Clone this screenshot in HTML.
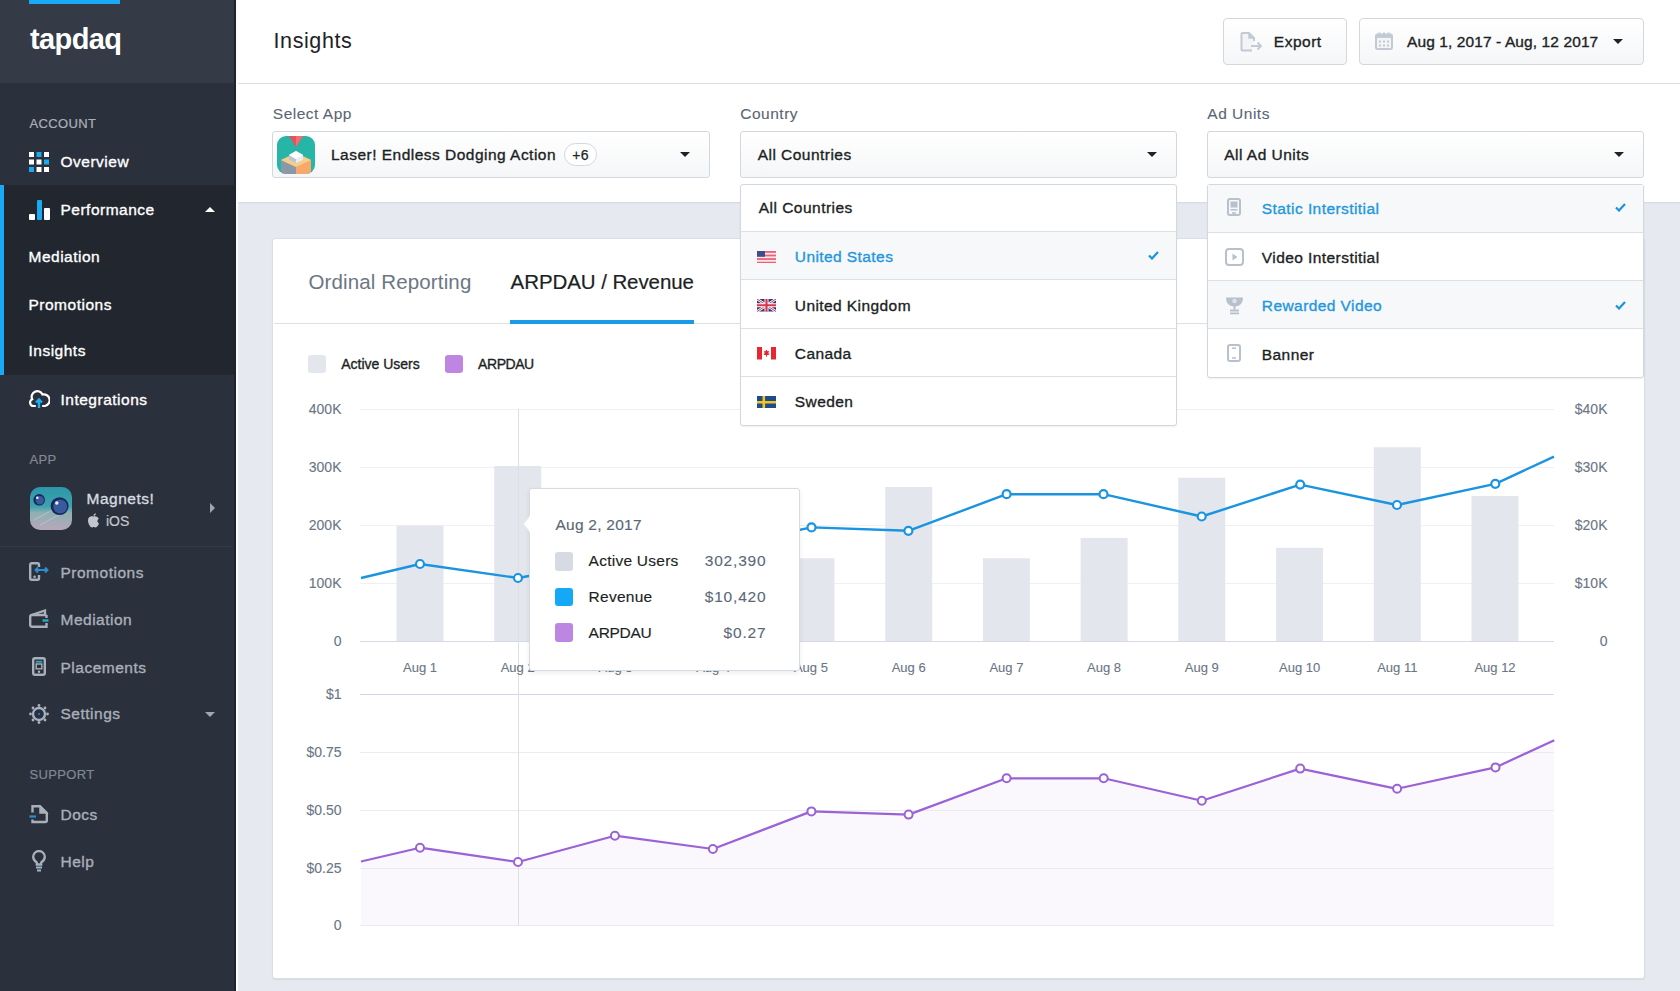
<!DOCTYPE html>
<html><head><meta charset="utf-8"><style>
*{box-sizing:border-box;margin:0;padding:0}
html,body{width:1680px;height:991px;overflow:hidden;background:#e6e9ef;font-family:"Liberation Sans",sans-serif;position:relative}
.abs{position:absolute}
.t{position:absolute;white-space:nowrap}
.sb{position:absolute;left:0;top:0;width:236px;height:991px;background:#2b313c;border-right:2px solid #1f232b}
.sb .logo{position:absolute;left:0;top:0;width:234px;height:83px;background:#343b47}
.sb .lbl{position:absolute;left:29.5px;font-size:13px;line-height:16px;color:#a9b1bb;letter-spacing:0.35px;-webkit-text-stroke:0.2px currentColor}
.sb .it{position:absolute;left:60.5px;font-size:15.5px;line-height:20px;color:#fff;letter-spacing:0.5px;-webkit-text-stroke:0.35px #fff}
.sb .it.g{color:#a9b0ba;-webkit-text-stroke:0.35px #a9b0ba}
.sb .sub{position:absolute;left:28.5px;font-size:15.5px;line-height:20px;color:#fff;letter-spacing:0.5px;-webkit-text-stroke:0.35px #fff}
.caret{position:absolute;width:0;height:0;border-left:5px solid transparent;border-right:5px solid transparent;border-top:5px solid #1f2329}
.box{position:absolute;border:1px solid #d3d8df;border-radius:3px;background:linear-gradient(#fff,#f5f6f8)}
.dd{position:absolute;background:#fff;border:1px solid #d3d8df;border-radius:3px;box-shadow:0 1px 2px rgba(0,0,0,0.07)}
.hl{position:absolute;background:#dde1e7;height:1px}
.ax{position:absolute;font-size:14px;line-height:16px;color:#6a7585;white-space:nowrap;-webkit-text-stroke:0.1px #6a7585}
.ax2{font-size:13px}
</style></head><body>
<!-- SIDEBAR -->
<div class="sb">
  <div class="logo"></div>
  <div class="abs" style="left:29px;top:0;width:91px;height:4px;background:#19a9f7"></div>
  <div class="abs" style="left:30px;top:22px;font-size:29px;line-height:34px;font-weight:700;color:#fff;letter-spacing:-0.6px">tapdaq</div>
  <!-- account section -->
  <div class="lbl" style="top:116.1px">ACCOUNT</div>
  <svg class="abs" style="left:29px;top:152px" width="20" height="20">
    <rect x="0" y="0" width="5" height="5" fill="#fff"/><rect x="7.5" y="0" width="5" height="5" fill="#19aaf0"/><rect x="15" y="0" width="5" height="5" fill="#fff"/>
    <rect x="0" y="7.5" width="5" height="5" fill="#fff"/><rect x="7.5" y="7.5" width="5" height="5" fill="#fff"/><rect x="15" y="7.5" width="5" height="5" fill="#19aaf0"/>
    <rect x="0" y="15" width="5" height="5" fill="#19aaf0"/><rect x="7.5" y="15" width="5" height="5" fill="#fff"/><rect x="15" y="15" width="5" height="5" fill="#fff"/>
  </svg>
  <div class="it" style="top:152.4px">Overview</div>
  <!-- performance submenu -->
  <div class="abs" style="left:0;top:185px;width:234px;height:190px;background:#22272f"></div>
    <div class="abs" style="left:0;top:185px;width:4px;height:190px;background:#19a9f7"></div>
  <svg class="abs" style="left:29px;top:199px" width="21" height="21">
    <rect x="0" y="15" width="6" height="6" rx="1" fill="#fff"/><rect x="8" y="1" width="5" height="20" rx="1" fill="#19aaf0"/><rect x="15" y="9" width="6" height="12" rx="1" fill="#fff"/>
  </svg>
  <div class="it" style="top:200px">Performance</div>
  <div class="abs" style="left:205px;top:207px;width:0;height:0;border-left:5px solid transparent;border-right:5px solid transparent;border-bottom:5px solid #fff"></div>
  <div class="sub" style="top:247.2px">Mediation</div>
  <div class="sub" style="top:294.8px">Promotions</div>
  <div class="sub" style="top:341.3px">Insights</div>
  <!-- integrations -->
  <svg class="abs" style="left:29px;top:389px" width="21" height="19" viewBox="0 0 21 19">
    <path d="M6 17 H4.5 A3.5 3.5 0 0 1 3.2 10.3 A5.5 5.5 0 0 1 13.5 5.5 A4.8 4.8 0 0 1 16 17 H14" fill="none" stroke="#fff" stroke-width="2.2" stroke-linecap="round"/>
    <path d="M10 19 V12 M7 13.5 L10 10.5 L13 13.5" fill="none" stroke="#1ab0f0" stroke-width="2.4"/>
  </svg>
  <div class="it" style="top:389.6px">Integrations</div>
  <!-- app -->
  <div class="lbl" style="top:451.5px;color:#7f8894">APP</div>
  <svg class="abs" style="left:30px;top:487px" width="42" height="43" viewBox="0 0 42 43">
    <defs><linearGradient id="mg" x1="0" y1="0" x2="0" y2="1"><stop offset="0" stop-color="#2a98aa"/><stop offset="0.45" stop-color="#3fa2ad"/><stop offset="0.6" stop-color="#8fb0b4"/><stop offset="1" stop-color="#b7a7bb"/></linearGradient></defs>
    <rect x="0" y="0" width="42" height="43" rx="10" fill="url(#mg)"/>
    <path d="M4 33 L30 19 M10 38 L36 24" stroke="#cfe3e6" stroke-width="1" opacity="0.45"/>
    <circle cx="9.2" cy="12.8" r="5.8" fill="#16285a"/><circle cx="9.8" cy="13.2" r="4.2" fill="#3a5aa0"/><circle cx="7.3" cy="10.8" r="1.3" fill="#f0f4ff"/>
    <circle cx="29.6" cy="19.1" r="8.9" fill="#16285a"/><circle cx="30.2" cy="19.5" r="6.9" fill="#3a5a9e"/><circle cx="26.8" cy="16" r="1.7" fill="#f0f4ff"/>
  </svg>
  <div class="abs" style="left:86.5px;top:488.6px;font-size:15.5px;line-height:20px;letter-spacing:0.5px;color:#d6dae0;-webkit-text-stroke:0.35px #d6dae0">Magnets!</div>
  <svg class="abs" style="left:87px;top:513px" width="13" height="15" viewBox="0 0 13 15">
    <path d="M6.5 3.5 C4 2.6 1 3.6 1 7.5 C1 11 3.5 14.5 5 14.5 C5.8 14.5 6 14 6.8 14 C7.6 14 7.8 14.5 8.5 14.5 C10 14.5 11.5 11.8 12 10.5 C10.3 9.8 9.8 7 11.8 5.8 C11 4 9 3 6.5 3.5 Z M6.5 3 C6.3 1.6 7.5 0.3 8.8 0.2 C9 1.6 7.8 3 6.5 3 Z" fill="#c2c7ce"/>
  </svg>
  <div class="abs" style="left:106px;top:512.4px;font-size:14px;line-height:18px;color:#c2c7ce;-webkit-text-stroke:0.2px #c2c7ce">iOS</div>
  <div class="abs" style="left:210px;top:503px;width:0;height:0;border-top:5px solid transparent;border-bottom:5px solid transparent;border-left:5px solid #a0a7b1"></div>
  <div class="abs" style="left:0;top:546px;width:232px;height:1px;background:#343a46"></div>
  <!-- app nav -->
  <svg class="abs" style="left:29px;top:562px" width="20" height="19" viewBox="0 0 20 19">
    <path d="M10 5 V2.5 A1.5 1.5 0 0 0 8.5 1.2 H2.7 A1.5 1.5 0 0 0 1.2 2.7 V16.3 A1.5 1.5 0 0 0 2.7 17.8 H8.5 A1.5 1.5 0 0 0 10 16.3 V13" fill="none" stroke="#a9b0ba" stroke-width="2.4"/>
    <circle cx="5.6" cy="14.8" r="1.3" fill="#a9b0ba"/>
    <path d="M6.5 8 H18.5 M9 5.5 L6.5 8 L9 10.5 M16 5.5 L18.5 8 L16 10.5" fill="none" stroke="#2a8fd0" stroke-width="2"/>
  </svg>
  <div class="it g" style="top:562.9px">Promotions</div>
  <svg class="abs" style="left:29px;top:609px" width="20" height="19" viewBox="0 0 20 19">
    <path d="M2.5 6 L16 1.5 V5.5" fill="none" stroke="#a9b0ba" stroke-width="2.3"/>
    <path d="M17.5 6 H3 A1.8 1.8 0 0 0 1.2 7.8 V16 A1.8 1.8 0 0 0 3 17.8 H17.5 V14 M17.5 6 V9" fill="none" stroke="#a9b0ba" stroke-width="2.4"/>
    <path d="M13.5 11.5 H19.5" stroke="#2aa9c9" stroke-width="2.4"/>
  </svg>
  <div class="it g" style="top:610.3px">Mediation</div>
  <svg class="abs" style="left:32px;top:656.5px" width="14" height="19" viewBox="0 0 14 19">
    <rect x="1.2" y="1.2" width="11.6" height="16.6" rx="1.8" fill="none" stroke="#a9b0ba" stroke-width="2.4"/>
    <rect x="3.8" y="3.8" width="6.4" height="1.8" fill="#2aa9c9"/><rect x="4.2" y="7" width="5.6" height="4.8" fill="none" stroke="#a9b0ba" stroke-width="1.4"/>
    <circle cx="7" cy="14.8" r="1.2" fill="#a9b0ba"/>
  </svg>
  <div class="it g" style="top:657.6px">Placements</div>
  <svg class="abs" style="left:29px;top:704px" width="20" height="20" viewBox="0 0 20 20">
    <circle cx="10" cy="10" r="6" fill="#23324a" stroke="#a9b0ba" stroke-width="2.4"/>
    <g fill="#a9b0ba"><circle cx="10" cy="1.5" r="1.4"/><circle cx="10" cy="18.5" r="1.4"/><circle cx="1.5" cy="10" r="1.4"/><circle cx="18.5" cy="10" r="1.4"/><circle cx="4" cy="4" r="1.4"/><circle cx="16" cy="16" r="1.4"/><circle cx="4" cy="16" r="1.4"/><circle cx="16" cy="4" r="1.4"/></g>
    <circle cx="10" cy="10" r="1" fill="#5a7aa0"/>
  </svg>
  <div class="it g" style="top:703.9px">Settings</div>
  <div class="abs" style="left:205px;top:711.5px;width:0;height:0;border-left:5px solid transparent;border-right:5px solid transparent;border-top:5px solid #a0a7b1"></div>
  <!-- support -->
  <div class="lbl" style="top:766.9px;color:#7f8894">SUPPORT</div>
  <svg class="abs" style="left:29px;top:804px" width="20" height="20" viewBox="0 0 20 20">
    <path d="M3.5 8.5 V2.2 H11 L17.8 9 V16.5 A1.5 1.5 0 0 1 16.3 18 H3.5 V15.5" fill="none" stroke="#a9b0ba" stroke-width="2.4"/>
    <path d="M11 2.2 V9 H17.8 Z" fill="#a9b0ba" stroke="#a9b0ba" stroke-width="1.5"/>
    <path d="M0.5 12.5 H7" stroke="#2a8fd0" stroke-width="2.2"/>
  </svg>
  <div class="it g" style="top:805.1px">Docs</div>
  <svg class="abs" style="left:32px;top:850px" width="14" height="22" viewBox="0 0 14 22">
    <path d="M4.8 14.5 V12.5 C2.5 11 1.2 9 1.2 6.8 A5.8 5.8 0 0 1 12.8 6.8 C12.8 9 11.5 11 9.2 12.5 V14.5 Z" fill="none" stroke="#a9b0ba" stroke-width="2.3"/>
    <path d="M4 17.5 H10 M5 20.5 H9" stroke="#a9b0ba" stroke-width="1.8"/>
    <path d="M5.5 19 H8.5" stroke="#2a8fd0" stroke-width="1.2"/>
  </svg>
  <div class="it g" style="top:852.3px">Help</div>
</div>



<div class="abs" style="left:236px;top:0;width:1444px;height:202px;background:#fff"></div>
<div class="abs" style="left:236px;top:83px;width:1444px;height:1px;background:#dadee5"></div>
<div class="abs" style="left:236px;top:202px;width:1444px;height:1px;background:#d9dde3"></div>
<div class="abs" style="left:236px;top:203px;width:1444px;height:1px;background:#e1e4ea"></div>
<div class="abs" style="left:236px;top:0;width:1.5px;height:991px;background:#fbfcfd"></div>
<div class="t" style="top:27.55px;font-size:21.5px;line-height:26px;color:#1e2126;letter-spacing:0.6px;left:273.50px;">Insights</div>
<div class="box" style="left:1223px;top:18px;width:124px;height:47px;border-radius:4px"></div>
<div class="box" style="left:1359px;top:18px;width:285px;height:47px;border-radius:4px"></div>
<svg class="abs" style="left:1240px;top:32px" width="23" height="20" viewBox="0 0 23 20"><path d="M12 18.5 H2.5 A1 1 0 0 1 1.5 17.5 V2 A1 1 0 0 1 2.5 1 H9 L14 6 V9" fill="#f2f4f7" stroke="#c3cad4" stroke-width="2"/><path d="M9 1 V6 H14" fill="#c3cad4" stroke="#c3cad4" stroke-width="1.5"/><path d="M11 14 H21 M17.5 10.5 L21 14 L17.5 17.5" fill="none" stroke="#c3cad4" stroke-width="1.8"/></svg>
<div class="t" style="top:32.03px;font-size:15.5px;line-height:20px;color:#1c1f24;letter-spacing:0.5px;-webkit-text-stroke:0.35px #1c1f24;left:1273.80px;">Export</div>
<svg class="abs" style="left:1375px;top:32px" width="18" height="18" viewBox="0 0 18 18"><rect x="1" y="2.5" width="16" height="14.5" rx="1.5" fill="#f2f4f7" stroke="#c3cad4" stroke-width="2"/><rect x="1" y="2.5" width="16" height="3.5" fill="#c3cad4"/><rect x="3.5" y="0.5" width="2" height="3" fill="#c3cad4"/><rect x="8" y="0.5" width="2" height="3" fill="#c3cad4"/><rect x="12.5" y="0.5" width="2" height="3" fill="#c3cad4"/><g fill="#c3cad4"><rect x="4" y="8.5" width="2" height="2"/><rect x="8" y="8.5" width="2" height="2"/><rect x="12" y="8.5" width="2" height="2"/><rect x="4" y="12.5" width="2" height="2"/><rect x="8" y="12.5" width="2" height="2"/><rect x="12" y="12.5" width="2" height="2"/></g></svg>
<div class="t" style="top:32.03px;font-size:15.5px;line-height:20px;color:#1c1f24;letter-spacing:0.1px;-webkit-text-stroke:0.35px #1c1f24;left:1407.00px;">Aug 1, 2017 - Aug, 12 2017</div>
<div class="caret" style="left:1613px;top:39px"></div>
<div class="t" style="top:103.73px;font-size:15.5px;line-height:20px;color:#5a6575;letter-spacing:0.5px;-webkit-text-stroke:0.1px #5a6575;left:272.80px;">Select App</div>
<div class="t" style="top:103.73px;font-size:15.5px;line-height:20px;color:#5a6575;letter-spacing:0.5px;-webkit-text-stroke:0.1px #5a6575;left:740.30px;">Country</div>
<div class="t" style="top:103.73px;font-size:15.5px;line-height:20px;color:#5a6575;letter-spacing:0.5px;-webkit-text-stroke:0.1px #5a6575;left:1207.30px;">Ad Units</div>
<div class="box" style="left:272px;top:131px;width:438px;height:47px"></div>
<div class="box" style="left:740px;top:131px;width:437px;height:47px"></div>
<div class="box" style="left:1207px;top:131px;width:437px;height:47px"></div>
<svg class="abs" style="left:277px;top:136px" width="38" height="38" viewBox="0 0 38 38">
<defs><clipPath id="ac"><rect width="38" height="38" rx="9"/></clipPath></defs>
<g clip-path="url(#ac)">
<rect width="38" height="38" fill="#26b5a6"/>
<path d="M12 0 H26 L19 11 Z" fill="#e8505f"/><path d="M19 0 H26 L19 11 Z" fill="#f07070"/>
<path d="M4 24 L19 17 L34 24 V38 H4 Z" fill="#f6a96a"/><path d="M4 24 L19 31 V38 H4 Z" fill="#8a99a8"/>
<path d="M4 24 L19 17 L34 24 L19 31 Z" fill="#f5cf8a"/>
<path d="M12 19 L19 15 L26 19 V24 L19 27 L12 24 Z" fill="#e9edf2"/><path d="M12 19 L19 23 V27 L12 24 Z" fill="#bcc5d0"/><path d="M12 19 L19 15 L26 19 L19 23 Z" fill="#fff"/>
</g></svg>
<div class="t" style="top:145.23px;font-size:15.5px;line-height:20px;color:#1c1f24;letter-spacing:0.48px;-webkit-text-stroke:0.35px #1c1f24;left:331.00px;">Laser! Endless Dodging Action</div>
<div class="abs" style="left:564px;top:143px;width:33px;height:23px;border:1px solid #d3d8df;border-radius:12px;background:#fff"></div>
<div class="t" style="top:145.65px;font-size:14px;line-height:18px;color:#1c1f24;letter-spacing:0.3px;-webkit-text-stroke:0.25px #1c1f24;left:565.50px;width:30px;text-align:center;">+6</div>
<div class="caret" style="left:679.5px;top:152px"></div>
<div class="t" style="top:145.43px;font-size:15.5px;line-height:20px;color:#1c1f24;letter-spacing:0.47px;-webkit-text-stroke:0.35px #1c1f24;left:757.70px;">All Countries</div>
<div class="caret" style="left:1146.5px;top:152px"></div>
<div class="t" style="top:145.43px;font-size:15.5px;line-height:20px;color:#1c1f24;letter-spacing:0.47px;-webkit-text-stroke:0.35px #1c1f24;left:1224.30px;">All Ad Units</div>
<div class="caret" style="left:1613.5px;top:152px"></div>
<div class="abs" style="left:272px;top:238px;width:1373px;height:741px;background:#fff;border:1px solid #d9dde4;border-radius:3px;box-shadow:0 1px 1px rgba(60,70,90,0.08)"></div>
<div class="abs" style="left:274px;top:323px;width:1369px;height:1px;background:#dde1e7"></div>
<div class="t" style="top:269.90px;font-size:20.5px;line-height:24px;color:#6b7685;letter-spacing:0.14px;left:308.40px;">Ordinal Reporting</div>
<div class="t" style="top:269.90px;font-size:20.5px;line-height:24px;color:#1c1f24;letter-spacing:-0.08px;-webkit-text-stroke:0.2px #1c1f24;left:510.60px;">ARPDAU / Revenue</div>
<div class="abs" style="left:510px;top:320px;width:184px;height:4px;background:#1a9be8"></div>
<div class="abs" style="left:308px;top:355px;width:18px;height:18px;border-radius:3px;background:#e3e6ec"></div>
<div class="t" style="top:356.45px;font-size:14px;line-height:16px;color:#1c1f24;letter-spacing:0px;-webkit-text-stroke:0.35px #1c1f24;left:341.20px;">Active Users</div>
<div class="abs" style="left:445.4px;top:355px;width:18px;height:18px;border-radius:3px;background:#be86e2"></div>
<div class="t" style="top:356.45px;font-size:14px;line-height:16px;color:#1c1f24;letter-spacing:-0.45px;-webkit-text-stroke:0.35px #1c1f24;left:478.10px;">ARPDAU</div>
<svg class="abs" style="left:0;top:0" width="1680" height="991" viewBox="0 0 1680 991">
<line x1="360" y1="409.5" x2="1554" y2="409.5" stroke="#eef0f3" stroke-width="1"/>
<line x1="360" y1="467.5" x2="1554" y2="467.5" stroke="#eef0f3" stroke-width="1"/>
<line x1="360" y1="525.5" x2="1554" y2="525.5" stroke="#eef0f3" stroke-width="1"/>
<line x1="360" y1="583.5" x2="1554" y2="583.5" stroke="#eef0f3" stroke-width="1"/>
<rect x="396.5" y="525.6" width="47" height="115.4" fill="#e3e6ed"/>
<rect x="494.2" y="466" width="47" height="175.0" fill="#e3e6ed"/>
<rect x="592.0" y="520" width="47" height="121.0" fill="#e3e6ed"/>
<rect x="689.7" y="560" width="47" height="81.0" fill="#e3e6ed"/>
<rect x="787.4" y="558.3" width="47" height="82.7" fill="#e3e6ed"/>
<rect x="885.2" y="487" width="47" height="154.0" fill="#e3e6ed"/>
<rect x="982.9" y="558.3" width="47" height="82.7" fill="#e3e6ed"/>
<rect x="1080.6" y="537.9" width="47" height="103.1" fill="#e3e6ed"/>
<rect x="1178.3" y="477.7" width="47" height="163.3" fill="#e3e6ed"/>
<rect x="1276.1" y="547.8" width="47" height="93.2" fill="#e3e6ed"/>
<rect x="1373.8" y="447.3" width="47" height="193.7" fill="#e3e6ed"/>
<rect x="1471.5" y="496" width="47" height="145.0" fill="#e3e6ed"/>
<line x1="360" y1="641.5" x2="1554" y2="641.5" stroke="#d5dae3" stroke-width="1"/>
<line x1="360" y1="694.5" x2="1554" y2="694.5" stroke="#d8d4e8" stroke-width="1"/>
<polygon points="361,926 361,861.5 420,847.7 518,862 614.9,835.7 712.9,849 811.4,811.4 908.6,814.6 1006.6,778.3 1103.7,778.3 1201.8,800.7 1300.2,768.6 1397.1,788.8 1495.5,767.4 1554.3,740.2 1554.3,926" fill="#faf8fd"/>
<line x1="360" y1="752.5" x2="1554" y2="752.5" stroke="#ebebf0" stroke-width="1"/>
<line x1="360" y1="810.5" x2="1554" y2="810.5" stroke="#ebebf0" stroke-width="1"/>
<line x1="360" y1="868.5" x2="1554" y2="868.5" stroke="#ebebf0" stroke-width="1"/>
<line x1="360" y1="925.5" x2="1554" y2="925.5" stroke="#ebebf0" stroke-width="1"/>
<line x1="518.5" y1="409" x2="518.5" y2="926" stroke="#dcdfe5" stroke-width="1"/>
<polyline points="361,578 420,564 518,578 615,560 713,548 811.5,527.4 908.4,530.8 1006.6,494.2 1103.5,494.2 1201.7,516.5 1300.2,484.6 1397,505 1495.3,483.8 1554,456.6" fill="none" stroke="#1a94e0" stroke-width="2.4" stroke-linejoin="round"/>
<circle cx="420" cy="564" r="4" fill="#fff" stroke="#1a94e0" stroke-width="2.2"/>
<circle cx="518" cy="578" r="4" fill="#fff" stroke="#1a94e0" stroke-width="2.2"/>
<circle cx="615" cy="560" r="4" fill="#fff" stroke="#1a94e0" stroke-width="2.2"/>
<circle cx="713" cy="548" r="4" fill="#fff" stroke="#1a94e0" stroke-width="2.2"/>
<circle cx="811.5" cy="527.4" r="4" fill="#fff" stroke="#1a94e0" stroke-width="2.2"/>
<circle cx="908.4" cy="530.8" r="4" fill="#fff" stroke="#1a94e0" stroke-width="2.2"/>
<circle cx="1006.6" cy="494.2" r="4" fill="#fff" stroke="#1a94e0" stroke-width="2.2"/>
<circle cx="1103.5" cy="494.2" r="4" fill="#fff" stroke="#1a94e0" stroke-width="2.2"/>
<circle cx="1201.7" cy="516.5" r="4" fill="#fff" stroke="#1a94e0" stroke-width="2.2"/>
<circle cx="1300.2" cy="484.6" r="4" fill="#fff" stroke="#1a94e0" stroke-width="2.2"/>
<circle cx="1397" cy="505" r="4" fill="#fff" stroke="#1a94e0" stroke-width="2.2"/>
<circle cx="1495.3" cy="483.8" r="4" fill="#fff" stroke="#1a94e0" stroke-width="2.2"/>
<polyline points="361,861.5 420,847.7 518,862 614.9,835.7 712.9,849 811.4,811.4 908.6,814.6 1006.6,778.3 1103.7,778.3 1201.8,800.7 1300.2,768.6 1397.1,788.8 1495.5,767.4 1554.3,740.2" fill="none" stroke="#9b62d6" stroke-width="2.2" stroke-linejoin="round"/>
<circle cx="420" cy="847.7" r="4" fill="#fff" stroke="#9b62d6" stroke-width="2"/>
<circle cx="518" cy="862" r="4" fill="#fff" stroke="#9b62d6" stroke-width="2"/>
<circle cx="614.9" cy="835.7" r="4" fill="#fff" stroke="#9b62d6" stroke-width="2"/>
<circle cx="712.9" cy="849" r="4" fill="#fff" stroke="#9b62d6" stroke-width="2"/>
<circle cx="811.4" cy="811.4" r="4" fill="#fff" stroke="#9b62d6" stroke-width="2"/>
<circle cx="908.6" cy="814.6" r="4" fill="#fff" stroke="#9b62d6" stroke-width="2"/>
<circle cx="1006.6" cy="778.3" r="4" fill="#fff" stroke="#9b62d6" stroke-width="2"/>
<circle cx="1103.7" cy="778.3" r="4" fill="#fff" stroke="#9b62d6" stroke-width="2"/>
<circle cx="1201.8" cy="800.7" r="4" fill="#fff" stroke="#9b62d6" stroke-width="2"/>
<circle cx="1300.2" cy="768.6" r="4" fill="#fff" stroke="#9b62d6" stroke-width="2"/>
<circle cx="1397.1" cy="788.8" r="4" fill="#fff" stroke="#9b62d6" stroke-width="2"/>
<circle cx="1495.5" cy="767.4" r="4" fill="#fff" stroke="#9b62d6" stroke-width="2"/>
</svg>
<div class="ax" style="right:1338.5px;top:400.9px">400K</div>
<div class="ax" style="right:1338.5px;top:458.9px">300K</div>
<div class="ax" style="right:1338.5px;top:516.9px">200K</div>
<div class="ax" style="right:1338.5px;top:574.9px">100K</div>
<div class="ax" style="right:1338.5px;top:632.9px">0</div>
<div class="ax" style="right:72.5px;top:400.9px">$40K</div>
<div class="ax" style="right:72.5px;top:458.9px">$30K</div>
<div class="ax" style="right:72.5px;top:516.9px">$20K</div>
<div class="ax" style="right:72.5px;top:574.9px">$10K</div>
<div class="ax" style="right:72.5px;top:632.9px">0</div>
<div class="ax" style="right:1338.5px;top:685.9px">$1</div>
<div class="ax" style="right:1338.5px;top:743.9px">$0.75</div>
<div class="ax" style="right:1338.5px;top:801.9px">$0.50</div>
<div class="ax" style="right:1338.5px;top:859.9px">$0.25</div>
<div class="ax" style="right:1338.5px;top:917.4px">0</div>
<div class="ax ax2" style="left:380.0px;width:80px;text-align:center;top:660.40px">Aug 1</div>
<div class="ax ax2" style="left:477.7px;width:80px;text-align:center;top:660.40px">Aug 2</div>
<div class="ax ax2" style="left:575.5px;width:80px;text-align:center;top:660.40px">Aug 3</div>
<div class="ax ax2" style="left:673.2px;width:80px;text-align:center;top:660.40px">Aug 4</div>
<div class="ax ax2" style="left:770.9px;width:80px;text-align:center;top:660.40px">Aug 5</div>
<div class="ax ax2" style="left:868.7px;width:80px;text-align:center;top:660.40px">Aug 6</div>
<div class="ax ax2" style="left:966.4px;width:80px;text-align:center;top:660.40px">Aug 7</div>
<div class="ax ax2" style="left:1064.1px;width:80px;text-align:center;top:660.40px">Aug 8</div>
<div class="ax ax2" style="left:1161.8px;width:80px;text-align:center;top:660.40px">Aug 9</div>
<div class="ax ax2" style="left:1259.6px;width:80px;text-align:center;top:660.40px">Aug 10</div>
<div class="ax ax2" style="left:1357.3px;width:80px;text-align:center;top:660.40px">Aug 11</div>
<div class="ax ax2" style="left:1455.0px;width:80px;text-align:center;top:660.40px">Aug 12</div>
<div class="abs" style="left:529px;top:488px;width:271px;height:183px;background:#fff;border:1px solid #d6dae1;border-radius:3px;box-shadow:0 2px 5px rgba(40,50,70,0.09)"></div>
<svg class="abs" style="left:522px;top:515px" width="8" height="18"><path d="M8 1 L1 9 L8 17 Z" fill="#fff"/><path d="M8 1 L1 9 L8 17" fill="none" stroke="#e2e5ea" stroke-width="1"/></svg>
<div class="abs" style="left:529px;top:516px;width:2px;height:16px;background:#fff"></div>
<div class="t" style="top:514.53px;font-size:15.5px;line-height:20px;color:#5b6777;letter-spacing:0.24px;-webkit-text-stroke:0.15px #5b6777;left:555.50px;">Aug 2, 2017</div>
<div class="abs" style="left:555.2px;top:552.4px;width:18.3px;height:18.2px;border-radius:3px;background:#d6dbe3"></div>
<div class="abs" style="left:555.2px;top:588px;width:18.3px;height:18.2px;border-radius:3px;background:#14a8f7"></div>
<div class="abs" style="left:555.2px;top:623.4px;width:18.3px;height:18.2px;border-radius:3px;background:#bd86e2"></div>
<div class="t" style="top:551.43px;font-size:15.5px;line-height:20px;color:#1c1f24;letter-spacing:0.25px;-webkit-text-stroke:0.15px #1c1f24;left:588.60px;">Active Users</div>
<div class="t" style="top:551.43px;font-size:15.5px;line-height:20px;color:#5b6777;letter-spacing:0.8px;-webkit-text-stroke:0.1px #5b6777;right:913.60px;text-align:right;">302,390</div>
<div class="t" style="top:587.33px;font-size:15.5px;line-height:20px;color:#1c1f24;letter-spacing:0.25px;-webkit-text-stroke:0.15px #1c1f24;left:588.60px;">Revenue</div>
<div class="t" style="top:587.33px;font-size:15.5px;line-height:20px;color:#5b6777;letter-spacing:0.8px;-webkit-text-stroke:0.1px #5b6777;right:913.60px;text-align:right;">$10,420</div>
<div class="t" style="top:622.63px;font-size:15.5px;line-height:20px;color:#1c1f24;letter-spacing:-0.3px;-webkit-text-stroke:0.15px #1c1f24;left:588.60px;">ARPDAU</div>
<div class="t" style="top:622.63px;font-size:15.5px;line-height:20px;color:#5b6777;letter-spacing:0.8px;-webkit-text-stroke:0.1px #5b6777;right:913.60px;text-align:right;">$0.27</div>
<div class="dd" style="left:740px;top:183.5px;width:437px;height:242px"></div>
<div class="abs" style="left:741px;top:232px;width:435px;height:47.5px;background:#f7f8fa"></div>
<div class="hl" style="left:741px;top:230.9px;width:435px"></div>
<div class="hl" style="left:741px;top:278.9px;width:435px"></div>
<div class="hl" style="left:741px;top:327.8px;width:435px"></div>
<div class="hl" style="left:741px;top:375.8px;width:435px"></div>
<div class="t" style="top:198.43px;font-size:15.5px;line-height:20px;color:#1c1f24;letter-spacing:0.47px;-webkit-text-stroke:0.35px #1c1f24;left:758.80px;">All Countries</div>
<div class="abs" style="left:757px;top:250.5px;line-height:0"><svg width="19" height="12.5" viewBox="0 0 19 13" preserveAspectRatio="none"><rect width="19" height="13" fill="#e8627a"/><g fill="#fbe6ea"><rect y="1.9" width="19" height="1.85"/><rect y="5.6" width="19" height="1.85"/><rect y="9.3" width="19" height="1.85"/></g><rect width="8" height="6" fill="#3b4f8f"/></svg></div>
<div class="t" style="top:247.03px;font-size:15.5px;line-height:20px;color:#1e97de;letter-spacing:0.42px;-webkit-text-stroke:0.35px #1e97de;left:794.80px;">United States</div>
<div class="abs" style="left:757px;top:299.3px;line-height:0"><svg width="19" height="12.5" viewBox="0 0 19 13" preserveAspectRatio="none"><rect width="19" height="13" fill="#2b3a7a"/><path d="M0 0 L19 13 M19 0 L0 13" stroke="#fff" stroke-width="2.6"/><path d="M0 0 L19 13 M19 0 L0 13" stroke="#d8344a" stroke-width="1"/><path d="M9.5 0 V13 M0 6.5 H19" stroke="#fff" stroke-width="4"/><path d="M9.5 0 V13 M0 6.5 H19" stroke="#d8344a" stroke-width="2.2"/></svg></div>
<div class="t" style="top:295.83px;font-size:15.5px;line-height:20px;color:#1c1f24;letter-spacing:0.42px;-webkit-text-stroke:0.35px #1c1f24;left:794.80px;">United Kingdom</div>
<div class="abs" style="left:757px;top:347.3px;line-height:0"><svg width="19" height="12.5" viewBox="0 0 19 13" preserveAspectRatio="none"><rect width="19" height="13" fill="#fff"/><rect width="5" height="13" fill="#e8262f"/><rect x="14" width="5" height="13" fill="#e8262f"/><path d="M9.5 2.5 L10.5 4.5 L12 4 L11.3 7 L12.5 6.8 L11.8 8.3 L10 8.2 L10 10 L9 10 L9 8.2 L7.2 8.3 L6.5 6.8 L7.7 7 L7 4 L8.5 4.5 Z" fill="#e8262f"/></svg></div>
<div class="t" style="top:343.83px;font-size:15.5px;line-height:20px;color:#1c1f24;letter-spacing:0.42px;-webkit-text-stroke:0.35px #1c1f24;left:794.80px;">Canada</div>
<div class="abs" style="left:757px;top:395.7px;line-height:0"><svg width="19" height="12.5" viewBox="0 0 19 13" preserveAspectRatio="none"><rect width="19" height="13" fill="#1e4a8e"/><rect x="5.5" width="2.6" height="13" fill="#f2c51e"/><rect y="5.2" width="19" height="2.6" fill="#f2c51e"/></svg></div>
<div class="t" style="top:392.23px;font-size:15.5px;line-height:20px;color:#1c1f24;letter-spacing:0.42px;-webkit-text-stroke:0.35px #1c1f24;left:794.80px;">Sweden</div>
<svg class="abs" style="left:1148px;top:251px" width="11" height="9" viewBox="0 0 11 9"><path d="M1 4.5 L4 7.5 L10 1" fill="none" stroke="#1a94dc" stroke-width="2.2"/></svg>
<div class="dd" style="left:1207px;top:183.5px;width:437px;height:194px"></div>
<div class="abs" style="left:1208px;top:184.5px;width:435px;height:47.5px;background:#f7f8fa"></div>
<div class="abs" style="left:1208px;top:281px;width:435px;height:47.5px;background:#f7f8fa"></div>
<div class="hl" style="left:1208px;top:231.6px;width:435px"></div>
<div class="hl" style="left:1208px;top:280.3px;width:435px"></div>
<div class="hl" style="left:1208px;top:328.4px;width:435px"></div>
<svg class="abs" style="left:1227px;top:198px" width="14" height="18" viewBox="0 0 14 18"><rect x="1" y="1" width="12" height="16" rx="2" fill="none" stroke="#b8c0cc" stroke-width="2"/><rect x="3.5" y="3.5" width="7" height="6" fill="#b8c0cc"/><rect x="3.5" y="11" width="7" height="1.5" fill="#b8c0cc"/><rect x="5" y="14.2" width="4" height="1.5" fill="#b8c0cc"/></svg>
<div class="t" style="top:198.83px;font-size:15.5px;line-height:20px;color:#1e97de;letter-spacing:0.43px;-webkit-text-stroke:0.35px #1e97de;left:1261.80px;">Static Interstitial</div>
<svg class="abs" style="left:1615px;top:203px" width="11" height="9" viewBox="0 0 11 9"><path d="M1 4.5 L4 7.5 L10 1" fill="none" stroke="#1a94dc" stroke-width="2.2"/></svg>
<svg class="abs" style="left:1224.5px;top:247.5px" width="19" height="18" viewBox="0 0 19 18"><rect x="1" y="1" width="17" height="16" rx="3" fill="none" stroke="#b8c0cc" stroke-width="2"/><path d="M7.5 5.5 L12.5 9 L7.5 12.5 Z" fill="#b8c0cc"/></svg>
<div class="t" style="top:248.23px;font-size:15.5px;line-height:20px;color:#1c1f24;letter-spacing:0.43px;-webkit-text-stroke:0.35px #1c1f24;left:1261.80px;">Video Interstitial</div>
<svg class="abs" style="left:1224.5px;top:296px" width="19" height="19" viewBox="0 0 19 19"><path d="M1 1.5 H18 C18 7.5 14.5 10.5 9.5 10.5 C4.5 10.5 1 7.5 1 1.5 Z" fill="#b8c0cc"/><rect x="8.5" y="10" width="2" height="3.5" fill="#b8c0cc"/><rect x="5" y="13.5" width="9" height="2" fill="#b8c0cc"/><rect x="5" y="16.5" width="9" height="1.8" fill="#b8c0cc"/><circle cx="9.5" cy="5" r="2.3" fill="#dfe3e9"/></svg>
<div class="t" style="top:296.33px;font-size:15.5px;line-height:20px;color:#1e97de;letter-spacing:0.43px;-webkit-text-stroke:0.35px #1e97de;left:1261.80px;">Rewarded Video</div>
<svg class="abs" style="left:1615px;top:301px" width="11" height="9" viewBox="0 0 11 9"><path d="M1 4.5 L4 7.5 L10 1" fill="none" stroke="#1a94dc" stroke-width="2.2"/></svg>
<svg class="abs" style="left:1227px;top:343.5px" width="14" height="18" viewBox="0 0 14 18"><rect x="1" y="1" width="12" height="16" rx="2" fill="none" stroke="#b8c0cc" stroke-width="2"/><rect x="5" y="3.5" width="4" height="1.5" fill="#b8c0cc"/><rect x="5" y="13.2" width="4" height="1.5" fill="#b8c0cc"/></svg>
<div class="t" style="top:345.33px;font-size:15.5px;line-height:20px;color:#1c1f24;letter-spacing:0.43px;-webkit-text-stroke:0.35px #1c1f24;left:1261.80px;">Banner</div>
</body></html>
